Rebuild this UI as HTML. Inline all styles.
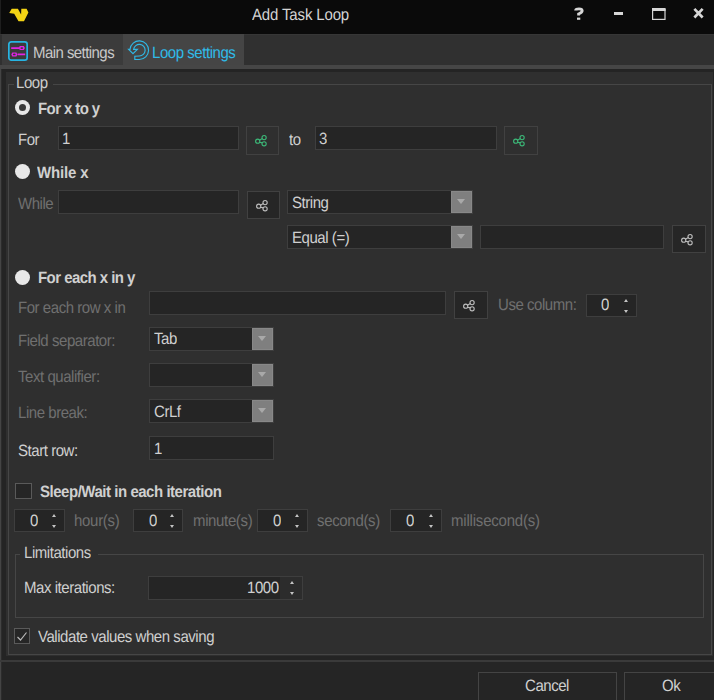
<!DOCTYPE html>
<html><head><meta charset="utf-8">
<style>
*{margin:0;padding:0;box-sizing:border-box}
html,body{width:714px;height:700px;overflow:hidden;background:#252525}
body{position:relative;font-family:"Liberation Sans",sans-serif;font-size:15px;letter-spacing:-0.45px;color:#d0d0d0;text-rendering:geometricPrecision}
.a{position:absolute}
.t{position:absolute;white-space:nowrap;line-height:15px;height:15px;transform:scaleY(1.09);transform-origin:0 11.5px}
.dis{color:#707070}
.b{font-weight:bold;letter-spacing:-0.1px}
.inp{position:absolute;background:#252525;border:1px solid #3e3e3e}
.btn{position:absolute;border:1px solid #414141;background:#2f2f2f}
.btn.d{background:#262626}
.cmb{position:absolute;background:#252525;border:1px solid #3e3e3e}
.dd{position:absolute;top:0;right:0;width:21px;bottom:0;background:#7f7f7f;border:1px solid #888}
.dd:after{content:"";position:absolute;left:5px;top:7px;border-left:4.5px solid transparent;border-right:4.5px solid transparent;border-top:5px solid #a9a9a9}
.spin{position:absolute;background:#252525;border:1px solid #3e3e3e}
.spin:before,.spin:after{content:"";position:absolute;right:8px;border-left:2.5px solid transparent;border-right:2.5px solid transparent}
.spin:before{top:4px;border-bottom:3px solid #c4c4c4}
.spin:after{top:15px;border-top:3px solid #c4c4c4}
.grp{position:absolute;border:1px solid #464646}
</style></head><body>

<!-- title bar -->
<div class="a" style="left:0;top:0;width:714px;height:34px;background:#0a0a0a"></div>
<div class="a" style="left:0;top:0;width:1px;height:34px;background:#1e1e1e"></div>
<svg class="a" style="left:0;top:0" width="40" height="34">
 <path d="M9.2,13.1 L11.7,8.7 L17.9,8.7 L21.1,14.6 L21.3,8.7 L26.6,8.7 L28.4,12.5 L24,21.2 L18.5,21.2 L14.2,13.7 Z" fill="#f3d314"/>
</svg>
<div class="t" style="left:252px;top:8px;letter-spacing:-0.15px;color:#d4d4d4">Add Task Loop</div>
<svg class="a" style="left:560px;top:0" width="154" height="34">
 <g stroke="#d6d6d6" fill="none">
  <path d="M15.6,10.6 Q15.6,8.8 19,8.8 Q22.2,8.8 22.2,10.8 Q22.2,12.4 18.6,14 V15.6" stroke-width="2.8"/>
  <rect x="17" y="17.6" width="3.3" height="2.2" fill="#d6d6d6" stroke="none"/>
  <rect x="54" y="12" width="9" height="3" fill="#d6d6d6" stroke="none"/>
  <rect x="92.6" y="9.6" width="12.4" height="9.8" stroke-width="1.2"/>
  <rect x="92" y="8" width="13.6" height="3" fill="#d6d6d6" stroke="none"/>
  <path d="M135.3,9.9 L141.7,16.5 M141.7,9.9 L135.3,16.5" stroke-width="2.7" stroke-linecap="square"/>
 </g>
</svg>

<!-- tab bar -->
<div class="a" style="left:0;top:34px;width:714px;height:31px;background:#303030;border-top:1px solid #363636"></div>
<div class="a" style="left:2px;top:34px;width:121px;height:31px;background:#3b3b3b"></div>
<div class="a" style="left:123px;top:34px;width:121px;height:31px;background:#454545"></div>
<svg class="a" style="left:8px;top:41px" width="20" height="20">
 <rect x="0.85" y="0.85" width="18.3" height="18.3" rx="2.4" fill="none" stroke="#27b4e2" stroke-width="1.7"/>
 <path d="M3.2,7.1 H11 M9.6,13.4 H17.2" stroke="#e223e6" stroke-width="1.6"/>
 <path d="M10.8,7.1 L11.8,5.1 L15.8,5.1 L16.9,7.1 L15.8,9.1 L11.8,9.1 Z M3.3,13.4 L4.3,11.4 L8.4,11.4 L9.4,13.4 L8.4,15.4 L4.3,15.4 Z" fill="#e223e6"/>
 <ellipse cx="13.8" cy="7.1" rx="1.4" ry="0.9" fill="#3b3b3b"/>
 <ellipse cx="6.3" cy="13.4" rx="1.4" ry="0.9" fill="#3b3b3b"/>
</svg>
<div class="t" style="left:33px;top:46px;color:#c8c8c8;letter-spacing:-0.56px">Main settings</div>
<svg class="a" style="left:120px;top:34px" width="34" height="30"><g transform="translate(-119.3,-34)">
 <path d="M134.1,59.4 L138.6,59.5 A9.3,9.3 0 1 0 129.3,49.3 L127.9,49.3 L132.3,53.7 L136.7,49.3 L132.9,49.3 A5.8,5.8 0 1 1 138.6,56 L134.1,56.3 Z" fill="none" stroke="#2fb8e6" stroke-width="1.15" stroke-linejoin="miter"/>
</g></svg>
<div class="t" style="left:152px;top:46px;color:#30bbe8">Loop settings</div>

<!-- strip -->
<div class="a" style="left:0;top:65px;width:714px;height:4px;background:#464646"></div>

<!-- panel -->
<div class="a" style="left:0;top:69px;width:1px;height:631px;background:#444"></div>
<div class="a" style="left:1px;top:69px;width:1px;height:631px;background:#2c2c2c"></div>
<div class="a" style="left:2px;top:69px;width:712px;height:591px;background:#242424"></div>
<div class="a" style="left:6px;top:72px;width:707px;height:584px;background:#2f2f2f"></div>
<div class="a" style="left:0;top:660px;width:714px;height:2px;background:#3a3a3a"></div>

<!-- Loop group -->
<div class="grp" style="left:8px;top:84px;width:704px;height:571px"></div>
<div class="a" style="left:14px;top:78px;width:39px;height:12px;background:#2f2f2f"></div>
<div class="t" style="left:16px;top:76px;color:#cdcdcd">Loop</div>


<!-- Row: For x to y -->
<div class="a" style="left:15px;top:100px;width:15px;height:15px;border-radius:50%;background:#e8e8e8"></div>
<div class="a" style="left:19px;top:104px;width:7px;height:7px;border-radius:50%;background:#3a3a3a"></div>
<div class="t b" style="left:38px;top:102px;letter-spacing:-0.6px">For x to y</div>
<div class="t" style="left:18px;top:133px">For</div>
<div class="inp" style="left:58px;top:126px;width:181px;height:24px"></div>
<div class="t" style="left:62px;top:132px">1</div>
<div class="btn" style="left:246px;top:126px;width:33px;height:29px"><svg class="a" style="left:8px;top:7px" width="14" height="14"><g fill="none" stroke="#3cb878" stroke-width="1.1"><circle cx="2.7" cy="7.2" r="2.1"/><circle cx="9.1" cy="3.6" r="2.1"/><circle cx="9.1" cy="9.8" r="2.1"/><path d="M4.5,6.2 L7.3,4.6 M4.5,8.2 L7.3,8.9"/></g></svg></div>
<div class="t" style="left:289px;top:133px">to</div>
<div class="inp" style="left:315px;top:126px;width:182px;height:24px"></div>
<div class="t" style="left:319px;top:132px">3</div>
<div class="btn" style="left:504px;top:126px;width:34px;height:29px"><svg class="a" style="left:8px;top:7px" width="14" height="14"><g fill="none" stroke="#3cb878" stroke-width="1.1"><circle cx="2.7" cy="7.2" r="2.1"/><circle cx="9.1" cy="3.6" r="2.1"/><circle cx="9.1" cy="9.8" r="2.1"/><path d="M4.5,6.2 L7.3,4.6 M4.5,8.2 L7.3,8.9"/></g></svg></div>

<!-- Row: While x -->
<div class="a" style="left:15px;top:164px;width:15px;height:15px;border-radius:50%;background:#e8e8e8"></div>
<div class="t b" style="left:37px;top:166px;letter-spacing:-0.15px">While x</div>
<div class="t dis" style="left:18px;top:197px">While</div>
<div class="inp" style="left:58px;top:190px;width:181px;height:24px"></div>
<div class="btn d" style="left:247px;top:191px;width:33px;height:28px"><svg class="a" style="left:8px;top:7px" width="14" height="14"><g fill="none" stroke="#bdbdbd" stroke-width="1.1"><circle cx="2.7" cy="7.2" r="2.1"/><circle cx="9.1" cy="3.6" r="2.1"/><circle cx="9.1" cy="9.8" r="2.1"/><path d="M4.5,6.2 L7.3,4.6 M4.5,8.2 L7.3,8.9"/></g></svg></div>
<div class="cmb" style="left:287px;top:190px;width:186px;height:24px"><div class="dd"></div></div>
<div class="t" style="left:292px;top:196px">String</div>
<div class="cmb" style="left:287px;top:225px;width:186px;height:24px"><div class="dd"></div></div>
<div class="t" style="left:292px;top:231px">Equal (=)</div>
<div class="inp" style="left:480px;top:225px;width:184px;height:24px"></div>
<div class="btn d" style="left:672px;top:225px;width:34px;height:28px"><svg class="a" style="left:8px;top:7px" width="14" height="14"><g fill="none" stroke="#bdbdbd" stroke-width="1.1"><circle cx="2.7" cy="7.2" r="2.1"/><circle cx="9.1" cy="3.6" r="2.1"/><circle cx="9.1" cy="9.8" r="2.1"/><path d="M4.5,6.2 L7.3,4.6 M4.5,8.2 L7.3,8.9"/></g></svg></div>

<!-- Row: For each -->
<div class="a" style="left:15px;top:270px;width:15px;height:15px;border-radius:50%;background:#e8e8e8"></div>
<div class="t b" style="left:38px;top:271px;letter-spacing:-0.55px">For each x in y</div>
<div class="t dis" style="left:18px;top:301px">For each row x in</div>
<div class="inp" style="left:149px;top:291px;width:297px;height:24px"></div>
<div class="btn d" style="left:454px;top:291px;width:34px;height:28px"><svg class="a" style="left:8px;top:7px" width="14" height="14"><g fill="none" stroke="#bdbdbd" stroke-width="1.1"><circle cx="2.7" cy="7.2" r="2.1"/><circle cx="9.1" cy="3.6" r="2.1"/><circle cx="9.1" cy="9.8" r="2.1"/><path d="M4.5,6.2 L7.3,4.6 M4.5,8.2 L7.3,8.9"/></g></svg></div>
<div class="t dis" style="left:498px;top:298px">Use column:</div>
<div class="spin" style="left:586px;top:294px;width:51px;height:23px"></div>
<div class="t" style="left:601px;top:298px">0</div>

<div class="t dis" style="left:18px;top:334px">Field separator:</div>
<div class="cmb" style="left:149px;top:327px;width:125px;height:24px"><div class="dd"></div></div>
<div class="t" style="left:154px;top:332px">Tab</div>
<div class="t dis" style="left:18px;top:370px">Text qualifier:</div>
<div class="cmb" style="left:149px;top:363px;width:125px;height:24px"><div class="dd"></div></div>
<div class="t dis" style="left:18px;top:406px">Line break:</div>
<div class="cmb" style="left:149px;top:399px;width:125px;height:24px"><div class="dd"></div></div>
<div class="t" style="left:154px;top:405px">CrLf</div>
<div class="t" style="left:18px;top:444px">Start row:</div>
<div class="inp" style="left:149px;top:436px;width:125px;height:24px"></div>
<div class="t" style="left:154px;top:442px">1</div>

<!-- Sleep -->
<div class="a" style="left:15px;top:483px;width:17px;height:16px;border:1px solid #5a5a5a;background:#262626"></div>
<div class="t b" style="left:40px;top:485px;letter-spacing:-0.47px">Sleep/Wait in each iteration</div>
<div class="spin" style="left:14px;top:509px;width:51px;height:23px"></div>
<div class="t" style="left:30px;top:514px">0</div>
<div class="t dis" style="left:74px;top:514px;letter-spacing:-0.3px">hour(s)</div>
<div class="spin" style="left:133px;top:509px;width:50px;height:23px"></div>
<div class="t" style="left:149px;top:514px">0</div>
<div class="t dis" style="left:193px;top:514px;letter-spacing:-0.36px">minute(s)</div>
<div class="spin" style="left:257px;top:509px;width:51px;height:23px"></div>
<div class="t" style="left:273px;top:514px">0</div>
<div class="t dis" style="left:317px;top:514px;letter-spacing:-0.33px">second(s)</div>
<div class="spin" style="left:390px;top:509px;width:52px;height:23px"></div>
<div class="t" style="left:406px;top:514px">0</div>
<div class="t dis" style="left:451px;top:514px;letter-spacing:-0.2px">millisecond(s)</div>

<!-- Limitations -->
<div class="grp" style="left:15px;top:554px;width:689px;height:64px"></div>
<div class="a" style="left:20px;top:546px;width:78px;height:14px;background:#2f2f2f"></div>
<div class="t" style="left:24px;top:546px;color:#cdcdcd">Limitations</div>
<div class="t" style="left:24px;top:581px">Max iterations:</div>
<div class="spin" style="left:148px;top:576px;width:155px;height:24px;background:linear-gradient(to right,#252525 131px,#2c2c2c 131px)"></div>
<div class="t" style="left:247px;top:581px">1000</div>

<!-- Validate -->
<div class="a" style="left:14px;top:628px;width:16px;height:16px;border:1px solid #5a5a5a;background:#262626"></div>
<svg class="a" style="left:14px;top:628px" width="16" height="16"><path d="M3.5,9 L6.5,12 L12.5,4.5" fill="none" stroke="#b8b8b8" stroke-width="1.2"/></svg>
<div class="t" style="left:38px;top:630px">Validate values when saving</div>

<!-- bottom buttons -->
<div class="a" style="left:478px;top:672px;width:139px;height:35px;border:1px solid #444;background:#252525"></div>
<div class="t" style="left:525px;top:679px">Cancel</div>
<div class="a" style="left:624px;top:672px;width:95px;height:35px;border:1px solid #444;background:#252525"></div>
<div class="t" style="left:662px;top:679px">Ok</div>

</body></html>
